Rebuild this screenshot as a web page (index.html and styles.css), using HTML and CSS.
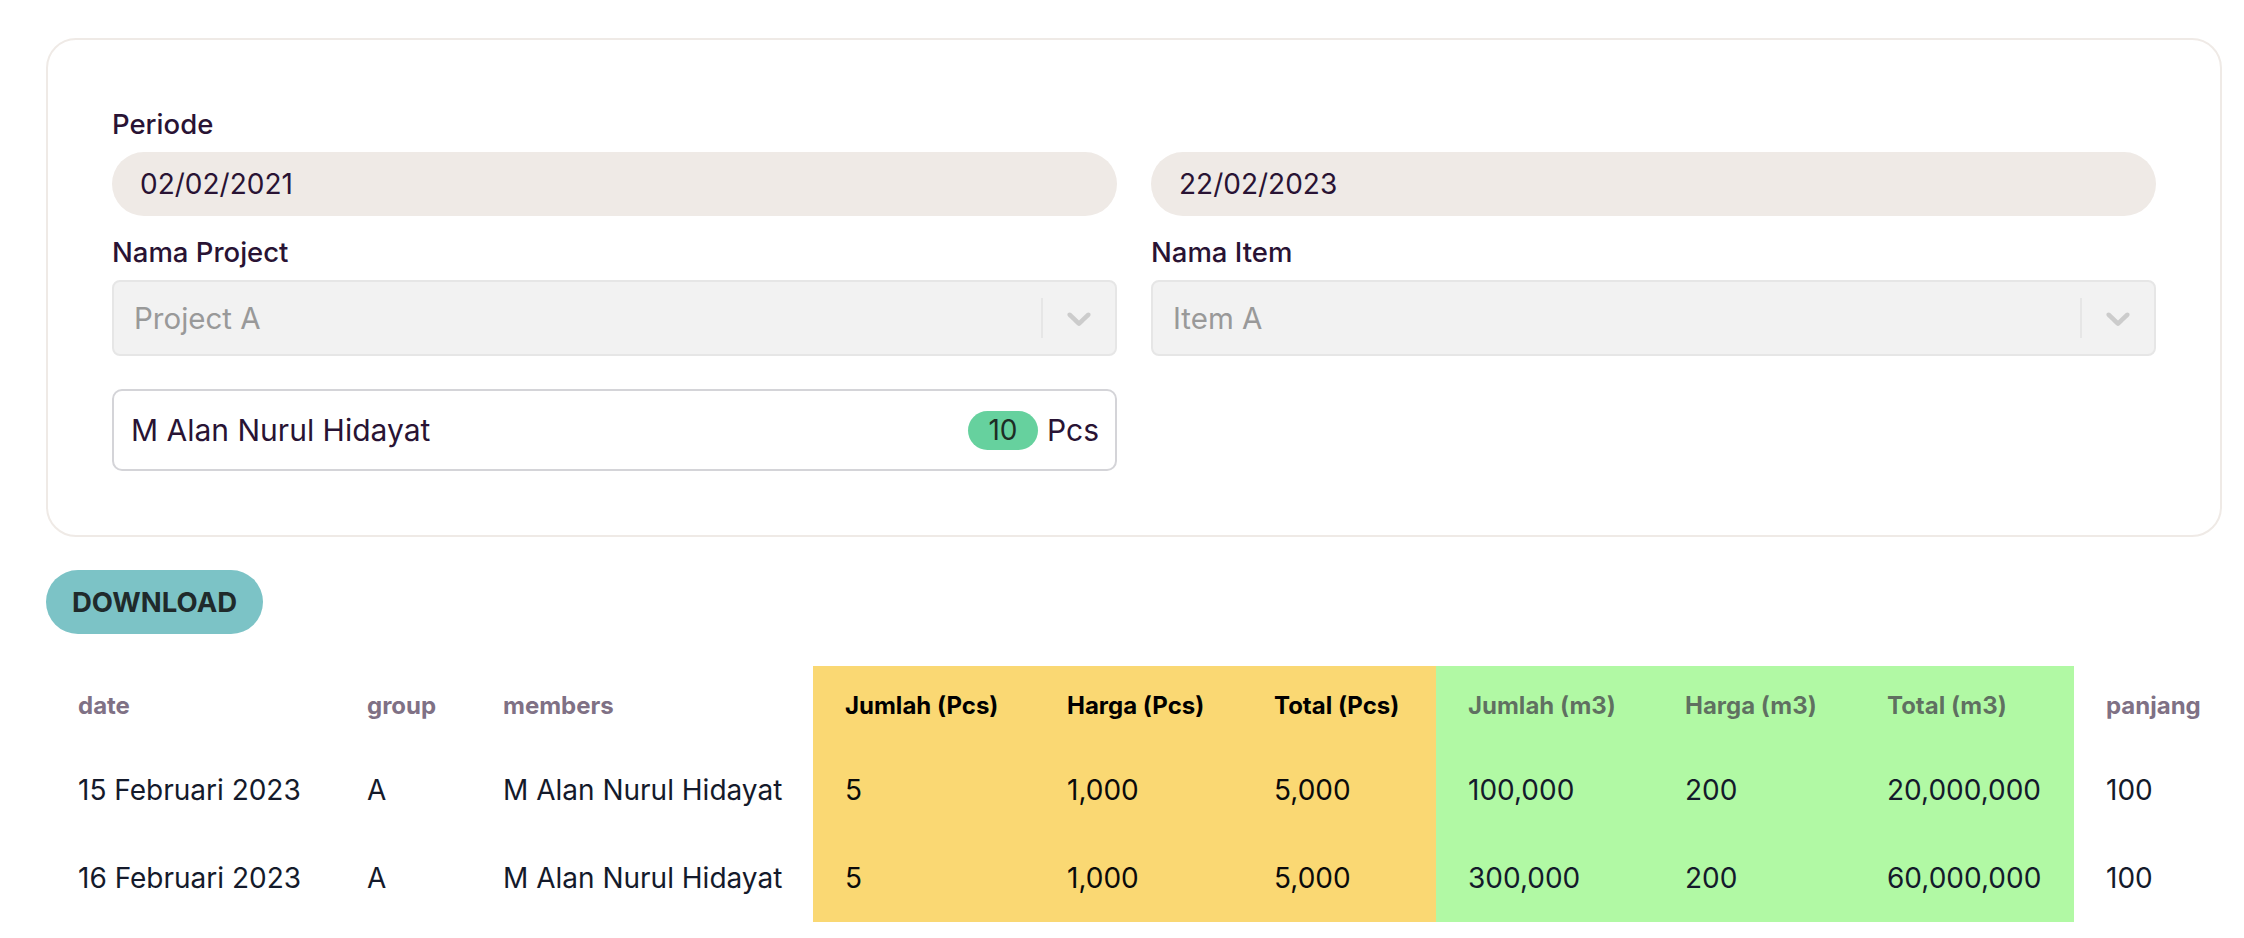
FILE: index.html
```html
<!DOCTYPE html>
<html lang="id">
<head>
<meta charset="utf-8">
<title>Laporan</title>
<link rel="stylesheet" href="styles.css">
</head>
<body>
<main class="page">
  <section class="card">
    <div class="form-grid">
      <div class="field">
        <label class="label">Periode</label>
        <div class="date-input">02/02/2021</div>
      </div>
      <div class="field">
        <label class="label label-empty">&nbsp;</label>
        <div class="date-input">22/02/2023</div>
      </div>
      <div class="field field-gap">
        <label class="label">Nama Project</label>
        <div class="select">
          <span class="select-value">Project A</span>
          <span class="select-sep"></span>
          <span class="select-ind">
            <svg viewBox="0 0 20 20" width="40" height="40"><path fill="#cccccc" d="M4.516 7.548c0.436-0.446 1.043-0.481 1.576 0l3.908 3.747 3.908-3.747c0.533-0.481 1.141-0.446 1.574 0 0.436 0.445 0.408 1.197 0 1.615-0.406 0.418-4.695 4.502-4.695 4.502-0.217 0.223-0.502 0.335-0.787 0.335s-0.57-0.112-0.789-0.335c0 0-4.287-4.084-4.695-4.502s-0.436-1.170 0-1.615z"/></svg>
          </span>
        </div>
      </div>
      <div class="field field-gap">
        <label class="label">Nama Item</label>
        <div class="select">
          <span class="select-value">Item A</span>
          <span class="select-sep"></span>
          <span class="select-ind">
            <svg viewBox="0 0 20 20" width="40" height="40"><path fill="#cccccc" d="M4.516 7.548c0.436-0.446 1.043-0.481 1.576 0l3.908 3.747 3.908-3.747c0.533-0.481 1.141-0.446 1.574 0 0.436 0.445 0.408 1.197 0 1.615-0.406 0.418-4.695 4.502-4.695 4.502-0.217 0.223-0.502 0.335-0.787 0.335s-0.57-0.112-0.789-0.335c0 0-4.287-4.084-4.695-4.502s-0.436-1.170 0-1.615z"/></svg>
          </span>
        </div>
      </div>
      <div class="field member-field">
        <div class="member-input">
          <span class="member-name">M Alan Nurul Hidayat</span>
          <span class="badge">10</span>
          <span class="unit">Pcs</span>
        </div>
      </div>
    </div>
  </section>

  <button class="btn-download">DOWNLOAD</button>

  <div class="table-wrap">
    <table class="report">
      <colgroup>
        <col class="c-date"><col class="c-group"><col class="c-members">
        <col class="c-jpcs"><col class="c-hpcs"><col class="c-tpcs">
        <col class="c-jm3"><col class="c-hm3"><col class="c-tm3">
        <col class="c-panjang">
      </colgroup>
      <thead>
        <tr>
          <th>date</th>
          <th>group</th>
          <th>members</th>
          <th class="pcs">Jumlah (Pcs)</th>
          <th class="pcs">Harga (Pcs)</th>
          <th class="pcs">Total (Pcs)</th>
          <th class="m3">Jumlah (m3)</th>
          <th class="m3">Harga (m3)</th>
          <th class="m3">Total (m3)</th>
          <th>panjang</th>
        </tr>
      </thead>
      <tbody>
        <tr>
          <td>15 Februari 2023</td>
          <td>A</td>
          <td>M Alan Nurul Hidayat</td>
          <td class="pcs">5</td>
          <td class="pcs">1,000</td>
          <td class="pcs">5,000</td>
          <td class="m3">100,000</td>
          <td class="m3">200</td>
          <td class="m3">20,000,000</td>
          <td>100</td>
        </tr>
        <tr>
          <td>16 Februari 2023</td>
          <td>A</td>
          <td>M Alan Nurul Hidayat</td>
          <td class="pcs">5</td>
          <td class="pcs">1,000</td>
          <td class="pcs">5,000</td>
          <td class="m3">300,000</td>
          <td class="m3">200</td>
          <td class="m3">60,000,000</td>
          <td>100</td>
        </tr>
      </tbody>
    </table>
  </div>
</main>
</body>
</html>
```

FILE: styles.css
```css
* { box-sizing: border-box; }

html, body {
  margin: 0;
  padding: 0;
  background: #ffffff;
  font-family: "Inter", "Noto Sans", sans-serif;
  color: #291334;
}

.page {
  padding: 38px 22px 0 46px;
}

.card {
  border: 2px solid #efeae6;
  border-radius: 30px;
  padding: 64px;
  background: #ffffff;
}

.form-grid {
  display: grid;
  grid-template-columns: 1fr 1fr;
  column-gap: 34px;
}

.field {
  display: flex;
  flex-direction: column;
}

.field-gap {
  margin-top: 16px;
}

.label {
  font-size: 27.5px;
  line-height: 40px;
  font-weight: 500;
  color: #291334;
  margin-bottom: 8px;
}

.date-input {
  height: 64px;
  border-radius: 32px;
  background: #efeae6;
  padding-left: 28px;
  display: flex;
  align-items: center;
  font-size: 28px;
  color: #291334;
}

.select {
  height: 76px;
  border: 2px solid #e6e6e6;
  border-radius: 8px;
  background: #f2f2f2;
  display: flex;
  align-items: center;
}

.select-value {
  flex: 1;
  padding-left: 20px;
  font-size: 29.5px;
  color: #999999;
}

.select-sep {
  width: 2px;
  height: 40px;
  background: #e6e6e6;
}

.select-ind {
  width: 72px;
  height: 72px;
  display: flex;
  align-items: center;
  justify-content: center;
}

.select-ind svg { display: block; }

.member-field {
  margin-top: 33px;
}

.member-input {
  height: 82px;
  border: 2px solid #d4d4d8;
  border-radius: 10px;
  background: #ffffff;
  display: flex;
  align-items: center;
  padding: 0 16px 0 17px;
}

.member-name {
  flex: 1;
  font-size: 30px;
  color: #291334;
}

.badge {
  width: 70px;
  height: 39px;
  border-radius: 20px;
  background: #66d19e;
  color: #1d2d25;
  font-size: 28px;
  display: flex;
  align-items: center;
  justify-content: center;
  margin-right: 9px;
}

.unit {
  font-size: 30px;
  color: #291334;
}

.btn-download {
  margin-top: 33px;
  width: 217px;
  height: 64px;
  border: none;
  border-radius: 32px;
  background: #7cc3c6;
  color: #1f2a2b;
  font-family: "Inter", "Noto Sans", sans-serif;
  font-size: 27.5px;
  font-weight: 700;
  padding: 0;
  display: block;
}

.table-wrap {
  margin-top: 32px;
}

.report {
  border-collapse: collapse;
  table-layout: fixed;
  width: 2187px;
}

.c-date { width: 289px; }
.c-group { width: 136px; }
.c-members { width: 342px; }
.c-jpcs { width: 222px; }
.c-hpcs { width: 207px; }
.c-tpcs { width: 194px; }
.c-jm3 { width: 217px; }
.c-hm3 { width: 202px; }
.c-tm3 { width: 219px; }
.c-panjang { width: 159px; }

.report th,
.report td {
  padding: 24px 32px;
  text-align: left;
  white-space: nowrap;
}

.report th {
  font-size: 24px;
  line-height: 32px;
  font-weight: 700;
  color: #7f7185;
}

.report td {
  font-size: 28px;
  line-height: 40px;
  font-weight: 400;
  color: #141a2b;
}

.report .pcs {
  background: #fad873;
}

.report th.pcs {
  color: #000000;
}

.report td.pcs {
  color: #0a0a0a;
}

.report .m3 {
  background: #b1f9a4;
}

.report th.m3 {
  color: rgba(41, 19, 52, 0.6);
}
```
